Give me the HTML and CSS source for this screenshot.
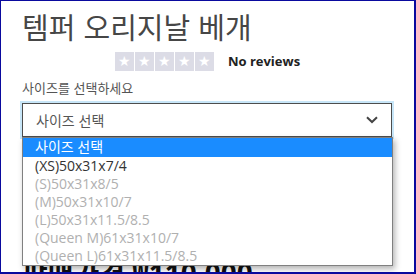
FILE: index.html
```html
<!DOCTYPE html>
<html lang="ko">
<head>
<meta charset="utf-8">
<link rel="stylesheet" href="styles.css">
</head>
<body>
<div class="frame">
  <h1 class="title">템퍼 오리지날 베개</h1>
  <div class="rating">
    <div class="stars">
      <span class="star">★</span><span class="star">★</span><span class="star">★</span><span class="star">★</span><span class="star">★</span>
    </div>
    <span class="reviews">No reviews</span>
  </div>
  <label class="label">사이즈를 선택하세요</label>
  <div class="select-wrap">
    <div class="select">
      <span class="select-text">사이즈 선택</span>
      <svg class="chevron" width="12" height="8" viewBox="0 0 12 8"><path d="M1 1.2 L6 6 L11 1.2" fill="none" stroke="#444" stroke-width="2"/></svg>
    </div>
    <ul class="options">
      <li class="opt active">사이즈 선택</li>
      <li class="opt">(XS)50x31x7/4</li>
      <li class="opt disabled">(S)50x31x8/5</li>
      <li class="opt disabled">(M)50x31x10/7</li>
      <li class="opt disabled">(L)50x31x11.5/8.5</li>
      <li class="opt disabled">(Queen M)61x31x10/7</li>
      <li class="opt disabled">(Queen L)61x31x11.5/8.5</li>
    </ul>
  </div>
  <div class="price">판매가격 ₩110,000</div>
</div>
</body>
</html>
```

FILE: styles.css
```css
html, body {
  margin: 0;
  padding: 0;
  background: #fff;
}
.frame {
  width: 416px;
  height: 274px;
  box-sizing: border-box;
  border-style: solid;
  border-color: #0a0a9e;
  border-width: 1px 2px 2px 1px;
  padding: 7px 0 0 21px;
  overflow: hidden;
  font-family: "Noto Sans", "Noto Sans CJK KR", sans-serif;
}
.title {
  margin: 0;
  font-family: "Noto Sans CJK KR", sans-serif;
  font-weight: 400;
  font-size: 29px;
  line-height: 36px;
  color: #464646;
}
.rating {
  display: flex;
  align-items: center;
  justify-content: center;
  gap: 14px;
  margin-top: 8px;
  padding-right: 21px;
  height: 19px;
}
.stars {
  display: flex;
  gap: 1px;
}
.star {
  width: 19px;
  height: 19px;
  background: #dcdce6;
  color: #fff;
  font-size: 14px;
  line-height: 19px;
  text-align: center;
  font-family: "DejaVu Sans", sans-serif;
}
.reviews {
  font-family: "Open Sans", sans-serif;
  font-weight: 700;
  font-size: 13px;
  line-height: 19px;
  color: #222;
}
.label {
  display: block;
  margin-top: 7px;
  font-family: "Noto Sans CJK KR", sans-serif;
  font-size: 13px;
  line-height: 20px;
  color: #555;
}
.select-wrap {
  position: relative;
  width: 370px;
  margin-top: 5px;
}
.select {
  height: 34px;
  box-sizing: border-box;
  border: 1px solid #4d4d4d;
  box-shadow: 0 0 0 2px #c8e6f8;
  display: flex;
  align-items: center;
  justify-content: space-between;
  padding: 0 13px 0 13px;
  background: #fff;
}
.select-text {
  font-family: "Noto Sans CJK KR", sans-serif;
  font-size: 14px;
  color: #555;
}
.chevron {
  display: block;
}
.options {
  position: absolute;
  left: 0;
  top: 34px;
  width: 371px;
  margin: 0;
  padding: 0;
  list-style: none;
  box-sizing: border-box;
  border: 1px solid #808080;
  background: #fff;
  box-shadow: 2px 3px 6px rgba(0,0,0,0.3);
  z-index: 2;
}
.opt {
  height: 18px;
  line-height: 18px;
  padding-left: 12px;
  font-family: "Open Sans", "Noto Sans CJK KR", sans-serif;
  font-size: 14px;
  color: #333;
  white-space: nowrap;
}
.opt.active {
  background: #1a8cff;
  color: #fff;
  height: 19px;
}
.opt.disabled {
  color: #b0b0b0;
}
.price {
  margin-top: 115px;
  font-family: "Open Sans", "Noto Sans CJK KR", sans-serif;
  font-weight: 700;
  font-size: 28px;
  color: #111;
  white-space: nowrap;
}
```
